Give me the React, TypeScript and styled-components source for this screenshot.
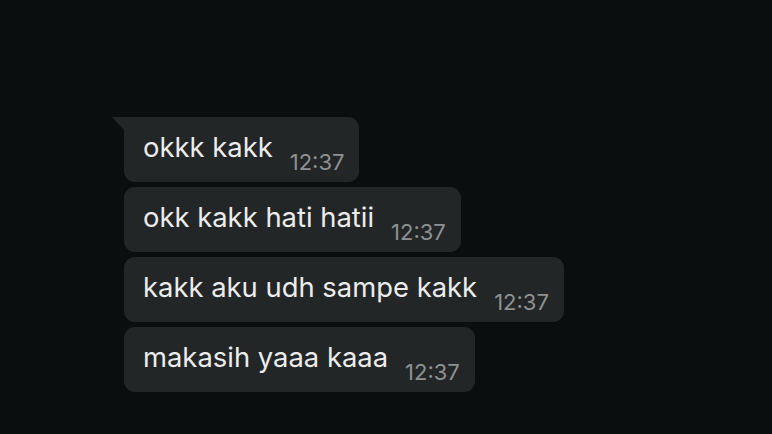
import React from "react";
import styled, { createGlobalStyle } from "styled-components";

const Global = createGlobalStyle`
  html, body { margin: 0; padding: 0; background: #0b0e0f; }
  body { font-family: Inter, "Noto Sans", sans-serif; }
`;

const Screen = styled.div`
  width: 772px;
  height: 434px;
  background: #0b0e0f;
  box-sizing: border-box;
  padding: 117px 0 0 124px;
  overflow: hidden;
`;

const Column = styled.div`
  display: flex;
  flex-direction: column;
  align-items: flex-start;
  gap: 5.5px;
`;

const Bubble = styled.div<{ $tail?: boolean }>`
  position: relative;
  display: flex;
  height: 64.5px;
  box-sizing: border-box;
  background: #232626;
  border-radius: ${(p) => (p.$tail ? "0 11px 11px 11px" : "11px")};
  padding: 0 15px 0 19px;
`;

const Tail = styled.svg`
  position: absolute;
  left: -12px;
  top: 0;
`;

const Text = styled.span`
  align-self: flex-start;
  padding-top: 14px;
  font-size: 27.4px;
  line-height: 32px;
  color: #ececec;
  white-space: nowrap;
`;

const Time = styled.span`
  align-self: flex-end;
  margin-left: 17px;
  padding-bottom: 7px;
  font-size: 22px;
  line-height: 26px;
  color: #8e9192;
  white-space: nowrap;
`;

const messages = [
  "okkk kakk",
  "okk kakk hati hatii",
  "kakk aku udh sampe kakk",
  "makasih yaaa kaaa",
];

export default function App() {
  return (
    <Screen>
      <Global />
      <Column>
        {messages.map((m, i) => (
          <Bubble key={i} $tail={i === 0}>
            {i === 0 && (
              <Tail width="13" height="14" viewBox="0 0 13 14">
                <path d="M0 0 H13 V14 L1.5 1.8 Q0.6 0.8 0 0 Z" fill="#232626" />
              </Tail>
            )}
            <Text>{m}</Text>
            <Time>12:37</Time>
          </Bubble>
        ))}
      </Column>
    </Screen>
  );
}
